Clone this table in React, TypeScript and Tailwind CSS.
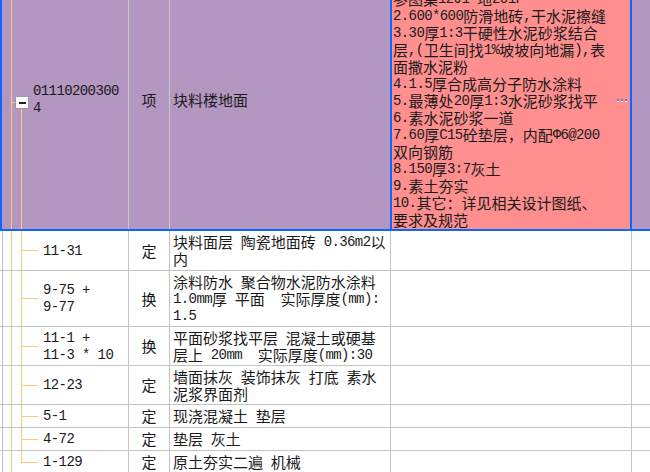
import React from "react";

function Tx({ s }: { s: string }) {
  const parts = s.split(/([\x20-\x7e\u0370-\u03ff]+)/).filter((p) => p.length > 0);
  return (
    <>
      {parts.map((p, i) =>
        /^[\x20-\x7e\u0370-\u03ff]+$/.test(p) ? (
          <span
            key={i}
            className="align-[2px] font-['Liberation_Mono','DejaVu_Sans_Mono',monospace] text-[14px] leading-[10px] tracking-[-0.6px]"
          >
            {p}
          </span>
        ) : (
          <span key={i}>{p}</span>
        )
      )}
    </>
  );
}

function Lines({ lines }: { lines: string[] }) {
  return (
    <>
      {lines.map((l, i) => (
        <div key={i} className="h-[17px] whitespace-pre leading-[17px]">
          <Tx s={l} />
        </div>
      ))}
    </>
  );
}

const redLines = [
  "1.防滑地砖楼面(有防水层)",
  "参图集12J1 地201F",
  "2.600*600防滑地砖,干水泥擦缝",
  "3.30厚1:3干硬性水泥砂浆结合",
  "层,(卫生间找1%坡坡向地漏),表",
  "面撒水泥粉",
  "4.1.5厚合成高分子防水涂料",
  "5.最薄处20厚1:3水泥砂浆找平",
  "6.素水泥砂浆一道",
  "7.60厚C15砼垫层，内配Φ6@200",
  "双向钢筋",
  "8.150厚3:7灰土",
  "9.素土夯实",
  "10.其它：详见相关设计图纸、",
  "要求及规范",
];

type Child = {
  h: string;
  code: string[];
  type: string;
  desc: string[];
  last?: boolean;
};

const children: Child[] = [
  { h: "h-[40px]", code: ["11-31"], type: "定", desc: ["块料面层 陶瓷地面砖 0.36m2以", "内"] },
  {
    h: "h-[56px]",
    code: ["9-75 +", "9-77"],
    type: "换",
    desc: ["涂料防水 聚合物水泥防水涂料", "1.0mm厚 平面  实际厚度(mm):", "1.5"],
  },
  {
    h: "h-[39px]",
    code: ["11-1 +", "11-3 * 10"],
    type: "换",
    desc: ["平面砂浆找平层 混凝土或硬基", "层上 20mm  实际厚度(mm):30"],
  },
  { h: "h-[39px]", code: ["12-23"], type: "定", desc: ["墙面抹灰 装饰抹灰 打底 素水", "泥浆界面剂"] },
  { h: "h-[23px]", code: ["5-1"], type: "定", desc: ["现浇混凝土 垫层"] },
  { h: "h-[23px]", code: ["4-72"], type: "定", desc: ["垫层 灰土"] },
  { h: "h-[23px]", code: ["1-129"], type: "定", desc: ["原土夯实二遍 机械"], last: true },
];

function ChildRow({ c }: { c: Child }) {
  return (
    <div className={`flex ${c.h} shrink-0 border-b border-[#c3c3c3]`}>
      <div className="flex w-[129px] shrink-0 border-r border-[#c3c3c3]">
        <div className="w-[2px] shrink-0" />
        <div className="w-px shrink-0 bg-[#c3c3c3]" />
        <div className="w-[8px] shrink-0" />
        <div className="w-px shrink-0 bg-[#ffc87c]" />
        <div className="w-[9px] shrink-0" />
        <div className="flex w-[17px] shrink-0 flex-col">
          <div className="flex-1 border-b border-l border-[#ffc87c]" />
          <div className={c.last ? "flex-1" : "flex-1 border-l border-[#ffc87c]"} />
        </div>
        <div className="flex flex-col justify-center pb-[1px] pl-[5px]">
          <Lines lines={c.code} />
        </div>
      </div>
      <div className="flex w-[41px] shrink-0 items-center justify-center border-r border-[#c3c3c3] pb-[1px]">
        <div className="leading-[17px]">
          <Tx s={c.type} />
        </div>
      </div>
      <div className="flex w-[221px] shrink-0 flex-col justify-center border-r border-[#c3c3c3] pb-[1px] pl-[3px]">
        <Lines lines={c.desc} />
      </div>
      <div className="w-[241px] shrink-0 border-r border-[#c3c3c3]" />
      <div className="flex-1" />
    </div>
  );
}

export default function App() {
  return (
    <div className="h-[472px] w-[650px] overflow-hidden bg-white font-['Noto_Sans_CJK_SC',sans-serif] text-[15px] leading-[17px] text-[#1a1a1a]">
      <div className="mt-[-27px] flex flex-col">
        {/* parent row */}
        <div className="flex h-[258px] shrink-0 border-b-2 border-l-2 border-[#0a66ff] bg-[#b497c0]">
          <div className="flex w-[127px] shrink-0 border-r border-[#c9c9c9]">
            <div className="w-[9px] shrink-0" />
            <div className="w-px shrink-0 bg-[#ffc87c]" />
            <div className="flex w-[17px] shrink-0 flex-col pt-[3px]">
              <div className="flex-1" />
              <div className="flex items-center">
                <div className="h-px w-[3px] bg-[#ffc87c]" />
                <div className="flex h-[13px] w-[14px] items-center justify-center border border-[#9a9a9a] bg-white">
                  <div className="h-[2px] w-[7px] bg-[#222]" />
                </div>
              </div>
              <div className="flex flex-1 pl-[9px]">
                <div className="w-px bg-[#ffc87c]" />
              </div>
            </div>
            <div className="flex flex-col justify-center pb-[4px] pl-[4px]">
              <Lines lines={["01110200300", "4"]} />
            </div>
          </div>
          <div className="flex w-[41px] shrink-0 items-center justify-center border-r border-[#c9c9c9] pb-[3px]">
            <div className="leading-[17px]">项</div>
          </div>
          <div className="flex w-[220px] shrink-0 items-center pb-[3px] pl-[3px]">
            <div className="leading-[17px]">块料楼地面</div>
          </div>
          <div className="flex w-[242px] shrink-0 border-l-2 border-r-2 border-[#0a66ff] bg-[#ff8f8f] pb-[1px] pl-[1px]">
            <div className="flex flex-1 flex-col">
              <Lines lines={redLines} />
            </div>
            <div className="flex gap-[2px] self-center pr-[3px]">
              <div className="h-[3px] w-[2px] border-t-2 border-[#4b8fd6] bg-white" />
              <div className="h-[3px] w-[2px] border-t-2 border-[#4b8fd6] bg-white" />
              <div className="h-[3px] w-[2px] border-t-2 border-[#4b8fd6] bg-white" />
            </div>
          </div>
          <div className="flex-1" />
        </div>
        {children.map((c, i) => (
          <ChildRow key={i} c={c} />
        ))}
      </div>
    </div>
  );
}
